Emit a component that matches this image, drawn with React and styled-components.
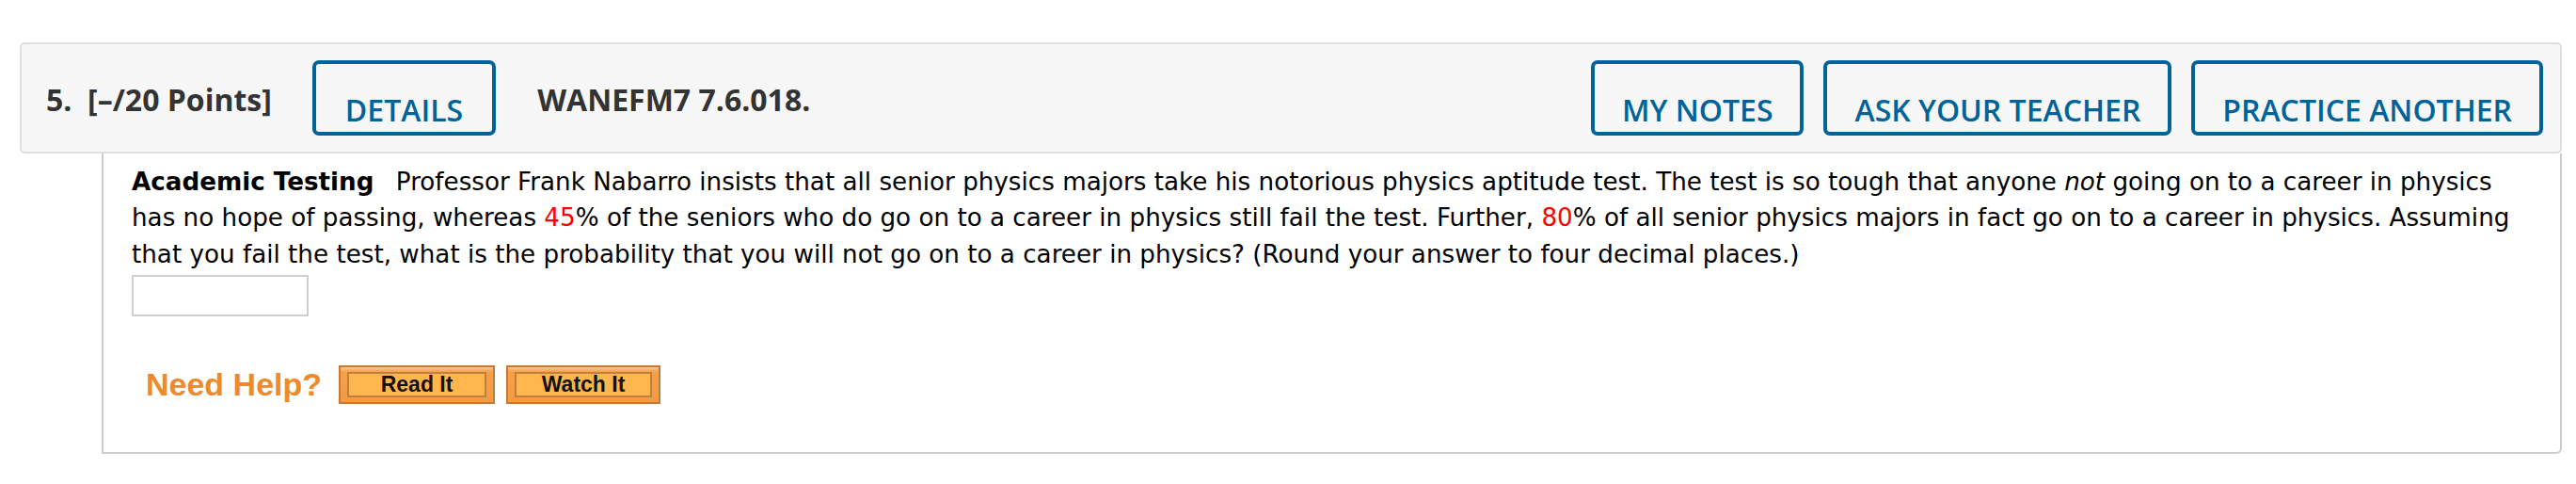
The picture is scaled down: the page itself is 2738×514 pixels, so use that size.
import React from "react";
import styled, { createGlobalStyle } from "styled-components";

const GlobalStyle = createGlobalStyle`
  html, body {
    margin: 0;
    padding: 0;
    background: #ffffff;
  }
`;

// Outer page wrapper
const Page = styled.div`
  padding: 45px 15px 0 21px;
`;

// Grey question header bar
const Header = styled.div`
  height: 114px;
  display: flex;
  align-items: center;
  background: #f7f7f7;
  border: 2px solid #dedede;
  border-radius: 5px;
  padding: 0 18px 0 26px;
  font-family: "Open Sans", "Liberation Sans", sans-serif;
  color: #333333;
`;

const HeaderText = styled.span`
  font-size: 32px;
  font-weight: 700;
  margin-top: 2px;
  margin-right: ${(p) => p.gap || 0}px;
  white-space: pre;
`;

const Spacer = styled.div`
  flex: 1;
`;

const ButtonGroup = styled.div`
  display: flex;
  gap: 21px;
`;

// Outlined blue header buttons
const OutlineButton = styled.button`
  box-sizing: border-box;
  height: 80px;
  display: flex;
  align-items: flex-end;
  justify-content: center;
  padding: 0 ${(p) => p.pad || 30}px 2px;
  margin-right: ${(p) => p.gap || 0}px;
  background: transparent;
  border: 4px solid #00639a;
  border-radius: 7px;
  color: #00639a;
  font-family: "Open Sans", "Liberation Sans", sans-serif;
  font-size: 32px;
  font-weight: 600;
  cursor: pointer;
`;

// Question body panel
const Body = styled.div`
  margin-left: 87px;
  border: 2px solid #cccccc;
  border-top: none;
  border-radius: 0 0 6px 0;
  padding: 11px 26px 51px 30px;
`;

const Question = styled.div`
  font-family: Verdana, "DejaVu Sans", sans-serif;
  font-size: 26.2px;
  line-height: 38.4px;
  color: #000000;
`;

const Topic = styled.b`
  margin-right: 15px;
`;

const Red = styled.span`
  color: #ff0000;
`;

const AnswerInput = styled.input`
  display: block;
  box-sizing: border-box;
  width: 188px;
  height: 44px;
  margin-top: 3px;
  border: 2px solid #cfcfcf;
  background: #ffffff;
  padding: 0 6px;
`;

const HelpRow = styled.div`
  display: flex;
  align-items: center;
  margin-top: 52px;
  padding-left: 15px;
  gap: 12px;
`;

const HelpLabel = styled.span`
  font-family: "Liberation Sans", Arial, sans-serif;
  font-size: 34px;
  font-weight: 700;
  color: #f0892c;
  margin-right: 6px;
`;

// Orange bevelled help buttons
const HelpButton = styled.button`
  box-sizing: border-box;
  width: ${(p) => p.w}px;
  height: 41px;
  padding: 5px 7px;
  border: 2px solid #c57a35;
  background: linear-gradient(#fbc690 0, #f6a04a 5px, #f39a42 100%);
  cursor: pointer;
`;

const HelpButtonInner = styled.span`
  box-sizing: border-box;
  display: flex;
  align-items: center;
  justify-content: center;
  height: 100%;
  border: 2px solid #c07e3f;
  background: #ffb64c;
  font-family: "Liberation Sans", Arial, sans-serif;
  font-size: 23px;
  font-weight: 700;
  color: #111111;
`;

const App = () => {
  return (
    <>
      <GlobalStyle />
      <Page>
        <Header>
          <HeaderText gap={43}>5.  [–/20 Points]</HeaderText>
          <OutlineButton pad={31} gap={44}>DETAILS</OutlineButton>
          <HeaderText>WANEFM7 7.6.018.</HeaderText>
          <Spacer />
          <ButtonGroup>
            <OutlineButton pad={29}>MY NOTES</OutlineButton>
            <OutlineButton pad={29}>ASK YOUR TEACHER</OutlineButton>
            <OutlineButton pad={29}>PRACTICE ANOTHER</OutlineButton>
          </ButtonGroup>
        </Header>
        <Body>
          <Question>
            <Topic>Academic Testing</Topic> Professor Frank Nabarro insists that
            all senior physics majors take his notorious physics aptitude test.
            The test is so tough that anyone <i>not</i> going on to a career in
            physics has no hope of passing, whereas <Red>45</Red>% of the seniors
            who do go on to a career in physics still fail the test. Further,{" "}
            <Red>80</Red>% of all senior physics majors in fact go on to a career
            in physics. Assuming that you fail the test, what is the probability
            that you will not go on to a career in physics? (Round your answer to
            four decimal places.)
          </Question>
          <AnswerInput type="text" />
          <HelpRow>
            <HelpLabel>Need Help?</HelpLabel>
            <HelpButton w={166}>
              <HelpButtonInner>Read It</HelpButtonInner>
            </HelpButton>
            <HelpButton w={164}>
              <HelpButtonInner>Watch It</HelpButtonInner>
            </HelpButton>
          </HelpRow>
        </Body>
      </Page>
    </>
  );
};

export default App;
